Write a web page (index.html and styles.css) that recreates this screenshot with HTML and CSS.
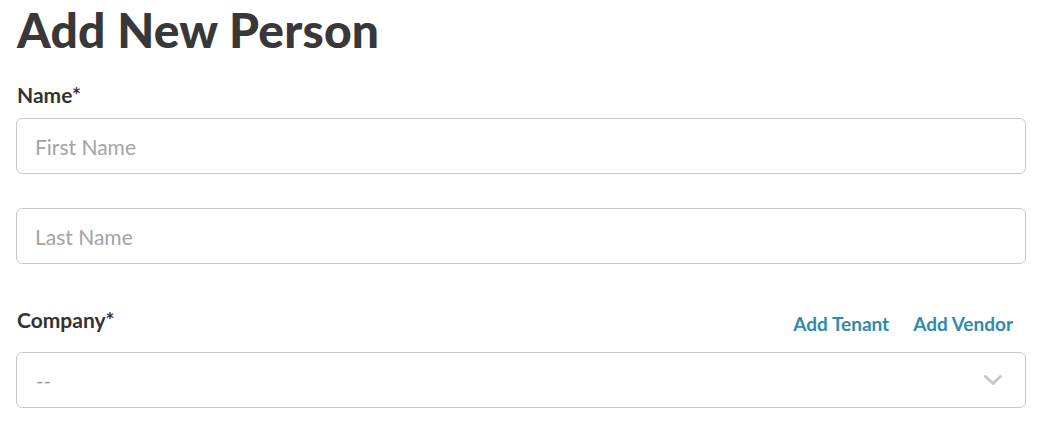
FILE: index.html
```html
<!DOCTYPE html>
<html lang="en">
<head>
<meta charset="utf-8">
<title>Add New Person</title>
<link rel="stylesheet" href="styles.css">
</head>
<body>
<main class="page">
  <h1 class="title">Add New Person</h1>
  <section class="field">
    <label class="label" for="first">Name*</label>
    <input class="input" id="first" type="text" placeholder="First Name">
    <input class="input input-gap" id="last" type="text" placeholder="Last Name">
  </section>
  <section class="field company">
    <div class="label-row">
      <label class="label" for="company">Company*</label>
      <div class="links">
        <a class="link" href="#">Add Tenant</a>
        <a class="link" href="#">Add Vendor</a>
      </div>
    </div>
    <div class="select">
      <span class="select-value">--</span>
      <svg class="chevron" width="18" height="11" viewBox="0 0 18 11"><path d="M1.5 1.5 L9 8.5 L16.5 1.5" fill="none" stroke="#c8c8c8" stroke-width="3" stroke-linecap="round" stroke-linejoin="round"/></svg>
    </div>
  </section>
</main>
</body>
</html>
```

FILE: styles.css
```css
html, body {
  margin: 0;
  padding: 0;
  background: #ffffff;
}
body {
  font-family: "Lato", "Noto Sans", sans-serif;
  color: #333333;
}
.page {
  width: 1010px;
  padding: 0 0 0 16px;
  display: flex;
  flex-direction: column;
}
.title {
  margin: 2px 0 0 1px;
  font-size: 48px;
  font-weight: 900;
  line-height: 56px;
  color: #383838;
  letter-spacing: 0.2px;
}
.field {
  display: flex;
  flex-direction: column;
}
.label {
  display: block;
  font-size: 21px;
  font-weight: 700;
  line-height: 24px;
  color: #333333;
  margin-left: 1px;
}
.field > .label {
  margin-top: 25px;
  margin-bottom: 11px;
}
.input {
  box-sizing: border-box;
  width: 1010px;
  height: 56px;
  margin: 0;
  border: 1.5px solid #c9c9c9;
  border-radius: 6px;
  padding: 0 18px;
  font-family: inherit;
  font-size: 21px;
  color: #333;
  outline: none;
  background: #fff;
}
.input::placeholder {
  color: #a3a3a3;
}
.input-gap {
  margin-top: 34px;
}
.label-row {
  display: flex;
  align-items: flex-end;
  justify-content: space-between;
  margin-top: 44px;
  margin-bottom: 20px;
}
.label-row .label {
  margin: 0 0 0 1px;
}
.links {
  display: flex;
  gap: 24px;
  margin-right: 13px;
  margin-bottom: -4px;
}
.link {
  font-size: 19px;
  font-weight: 700;
  line-height: 24px;
  color: #2e8bac;
  text-decoration: none;
}
.select {
  box-sizing: border-box;
  width: 1010px;
  height: 56px;
  border: 1.5px solid #c9c9c9;
  border-radius: 6px;
  padding: 0 23px 0 19px;
  display: flex;
  align-items: center;
  justify-content: space-between;
}
.select-value {
  font-size: 20px;
  color: #9a9a9a;
}
.chevron {
  display: block;
}
```
